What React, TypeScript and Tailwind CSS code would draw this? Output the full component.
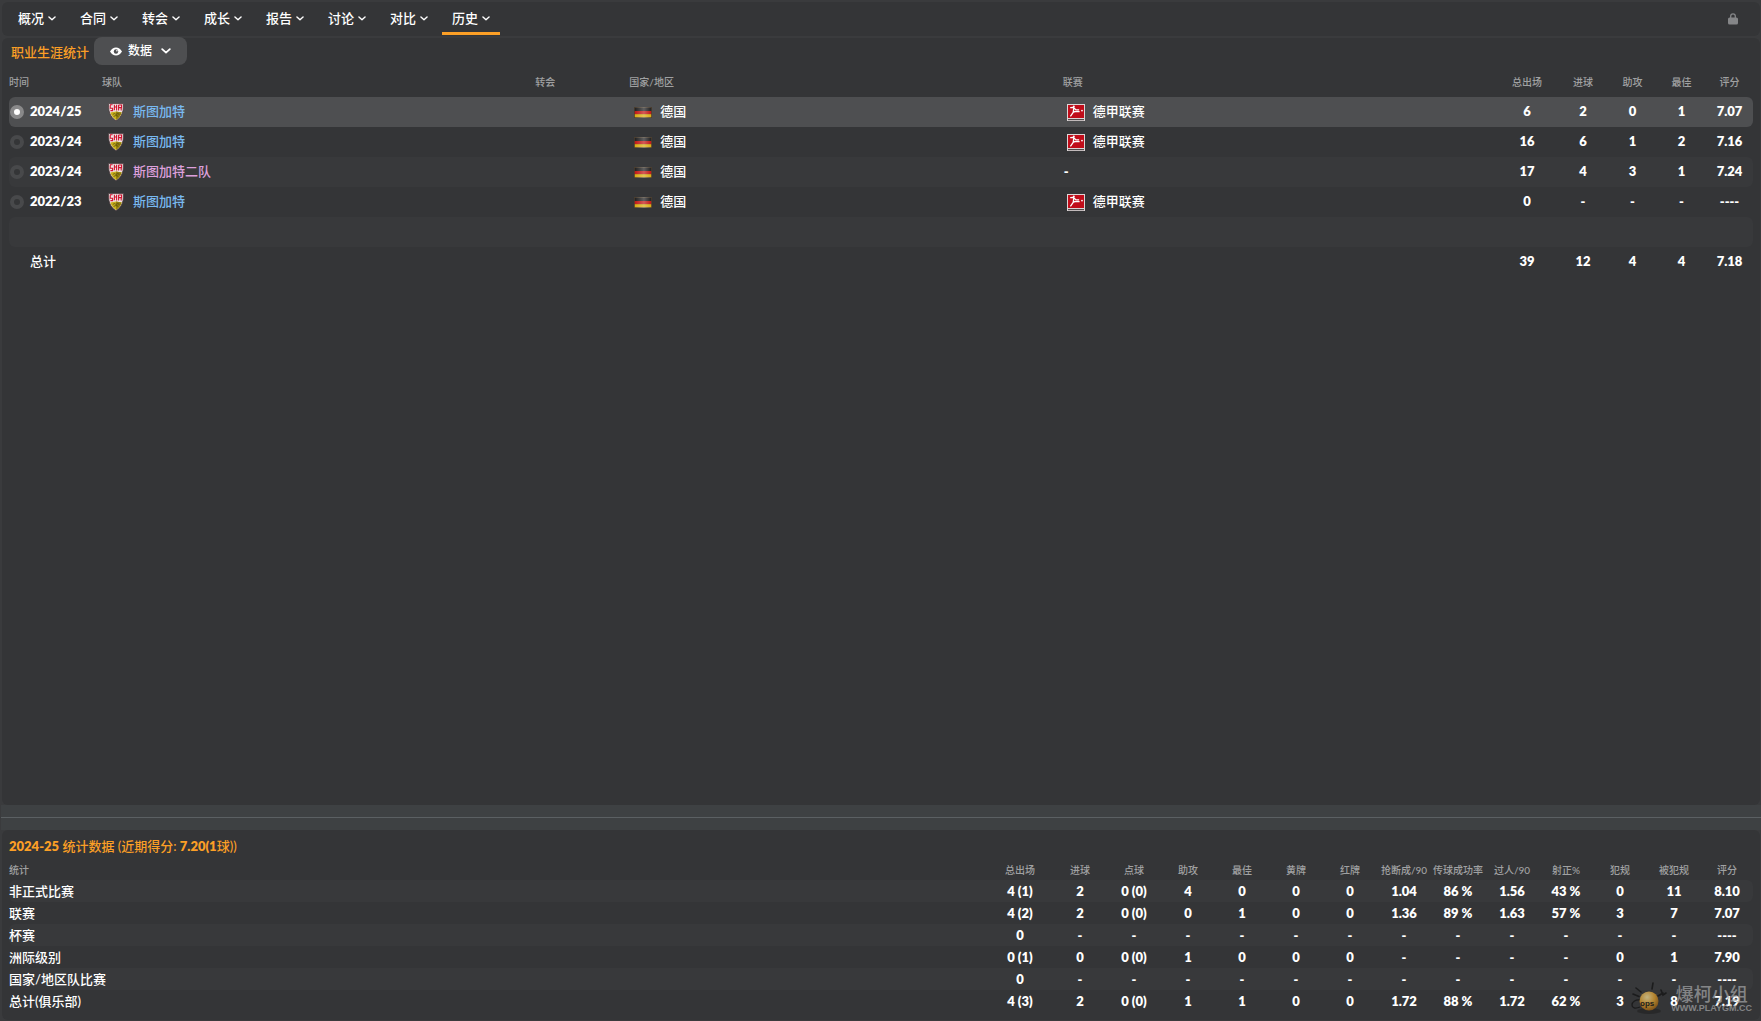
import React, { useState } from "react";

const navItems = ["概况", "合同", "转会", "成长", "报告", "讨论", "对比", "历史"];

type Season = {
  season: string;
  team: string;
  reserve?: boolean;
  country: string;
  league: string | null;
  stats: string[];
};

const seasons: Season[] = [
  { season: "2024/25", team: "斯图加特", country: "德国", league: "德甲联赛", stats: ["6", "2", "0", "1", "7.07"] },
  { season: "2023/24", team: "斯图加特", country: "德国", league: "德甲联赛", stats: ["16", "6", "1", "2", "7.16"] },
  { season: "2023/24", team: "斯图加特二队", reserve: true, country: "德国", league: null, stats: ["17", "4", "3", "1", "7.24"] },
  { season: "2022/23", team: "斯图加特", country: "德国", league: "德甲联赛", stats: ["0", "-", "-", "-", "----"] },
];

const careerTotals = ["39", "12", "4", "4", "7.18"];
const careerStatHeads = ["总出场", "进球", "助攻", "最佳", "评分"];

const detailHeads = [
  "总出场", "进球", "点球", "助攻", "最佳", "黄牌", "红牌",
  "抢断成/90", "传球成功率", "过人/90", "射正%", "犯规", "被犯规", "评分",
];

const detailRows: { name: string; values: string[] }[] = [
  { name: "非正式比赛", values: ["4 (1)", "2", "0 (0)", "4", "0", "0", "0", "1.04", "86 %", "1.56", "43 %", "0", "11", "8.10"] },
  { name: "联赛", values: ["4 (2)", "2", "0 (0)", "0", "1", "0", "0", "1.36", "89 %", "1.63", "57 %", "3", "7", "7.07"] },
  { name: "杯赛", values: ["0", "-", "-", "-", "-", "-", "-", "-", "-", "-", "-", "-", "-", "----"] },
  { name: "洲际级别", values: ["0 (1)", "0", "0 (0)", "1", "0", "0", "0", "-", "-", "-", "-", "0", "1", "7.90"] },
  { name: "国家/地区队比赛", values: ["0", "-", "-", "-", "-", "-", "-", "-", "-", "-", "-", "-", "-", "----"] },
  { name: "总计(俱乐部)", values: ["4 (3)", "2", "0 (0)", "1", "1", "0", "0", "1.72", "88 %", "1.72", "62 %", "3", "8", "7.19"] },
];

function Chevron({ className }: { className: string }) {
  return (
    <svg viewBox="0 0 10 6" className={className} fill="none" stroke="currentColor" strokeWidth="1.800" aria-hidden="true">
      <path d="M1.2 1.2 5 4.6 8.8 1.2" strokeLinecap="round" strokeLinejoin="round" />
    </svg>
  );
}

function EyeIcon() {
  return (
    <svg viewBox="0 0 12 9" className="h-[9px] w-3" aria-hidden="true">
      <path d="M0 4.5C1.6 1.8 3.6.4 6 .4s4.400 1.400 6 4.100C10.400 7.200 8.400 8.600 6 8.600S1.600 7.200 0 4.500Z" fill="#fff" />
      <circle cx="6" cy="4.500" r="2.200" fill="#4e4f51" />
      <circle cx="6.900" cy="3.700" r=".8" fill="#fff" />
    </svg>
  );
}

function LockIcon() {
  return (
    <svg viewBox="0 0 10 12" className="h-3 w-[10px]" aria-hidden="true">
      <path d="M2.700 5V3.100a2.300 2.300 0 0 1 4.600 0V5" fill="none" stroke="#858688" strokeWidth="1.300" />
      <rect x="0" y="4.400" width="10" height="7.200" rx="1.600" fill="#858688" />
    </svg>
  );
}

function ClubCrest() {
  return (
    <svg viewBox="0 0 16 18" className="h-[18px] w-4 shrink-0" aria-hidden="true">
      <path d="M.6.6h14.800c.3 5-.4 9-2.400 12.200C11.700 14.900 10 16.500 8 17.600 6 16.500 4.300 14.900 3 12.800 1 9.600.3 5.600.6.600Z" fill="#efe3e4" stroke="#4a3a3c" strokeWidth=".8" />
      <path d="M2.300 9.600 8 8.600l5.700 1c-1 3.200-2.900 5.700-5.700 7.300-2.800-1.600-4.700-4.100-5.700-7.300Z" fill="#c9b01c" />
      <path d="M8 8.600V16.900c2.800-1.600 4.700-4.100 5.700-7.300Z" fill="#94800f" />
      <path d="m4.800 11.400 1.700-.8 1.500.8 1.800-.8 1.600.8M5.600 13.400l2.400-.9 2.200.8" fill="none" stroke="#4a400c" strokeWidth=".7" />
      <path d="M2 1.800h2.600M2.200 2.200v3h2.400v2.400H2.400M6.400 1.800v5.400M6.400 4h2.200M8.600 1.800v5.800M10.600 1.800v5.600M11 2h2.600v2.600H11M13.200 5v2.400" fill="none" stroke="#d2122e" strokeWidth="1.100" />
    </svg>
  );
}

function GermanFlag() {
  return (
    <svg viewBox="0 0 18 11" className="h-[11px] w-[18px] shrink-0" aria-hidden="true">
      <defs>
        <linearGradient id="flagShine" x1="0" x2="1" y1="0" y2="0">
          <stop offset="0" stopColor="#fff" stopOpacity="0" />
          <stop offset=".55" stopColor="#fff" stopOpacity=".3" />
          <stop offset="1" stopColor="#fff" stopOpacity="0" />
        </linearGradient>
      </defs>
      <rect width="18" height="11" fill="#4a3d2c" />
      <rect x=".8" y="0.800" width="16.400" height="3.200" fill="#1b1b1c" />
      <rect x=".8" y="4" width="16.400" height="3.200" fill="#c0120f" />
      <rect x=".8" y="7.200" width="16.400" height="3" fill="#d9a90b" />
      <rect width="18" height="11" fill="url(#flagShine)" />
    </svg>
  );
}

function LeagueBadge() {
  return (
    <svg viewBox="0 0 18 17" className="h-[17px] w-[18px] shrink-0" aria-hidden="true">
      <rect width="18" height="17" fill="#dcd6d6" />
      <rect x="1" y="1" width="16" height="13" fill="#c00d1a" />
      <rect x="1" y="15" width="16" height="1.200" fill="#55494a" />
      <path d="M3.200 3.600 6.500 3.400l2.200 2.200 3.400.2M6.800 4.200 6.200 8.400 3.400 12.400M6.400 8l2.600-.6 3.600.2" fill="none" stroke="#fff" strokeWidth="1.300" strokeLinejoin="round" />
      <circle cx="6.800" cy="2.600" r="1" fill="#fff" />
      <circle cx="15" cy="6.600" r=".9" fill="#fff" />
    </svg>
  );
}

function Watermark() {
  return (
    <div className="pointer-events-none absolute right-2 bottom-1 flex items-center gap-1 opacity-70">
      <svg viewBox="0 0 36 34" className="h-[34px] w-9" aria-hidden="true">
        <defs>
          <radialGradient id="orb" cx=".4" cy=".3" r=".8">
            <stop offset="0" stopColor="#ffe9a0" />
            <stop offset=".5" stopColor="#e9a52c" />
            <stop offset="1" stopColor="#8a4c05" />
          </radialGradient>
        </defs>
        <ellipse cx="18" cy="29" rx="12" ry="3" fill="#1c1c1c" opacity=".7" />
        <path d="M2 12l6 2.500M5 6l5 4M22 1l-1 6M27 14l5-3M30 8l2 5 3-2" fill="none" stroke="#111" strokeWidth="1.600" strokeLinecap="round" />
        <path d="M9 18c-4-1-8 2-8 5s3 4 8 2" fill="none" stroke="#111" strokeWidth="1.300" />
        <circle cx="18" cy="19" r="9.500" fill="url(#orb)" />
        <text x="9" y="24" fontSize="8" fontWeight="700" fontFamily="Liberation Sans, sans-serif" fill="#111">ops</text>
      </svg>
      <div className="flex flex-col items-center text-[#a5a6a8]">
        <span className="text-lg leading-[18px] font-medium">爆柯小组</span>
        <span className="font-['Liberation_Sans',sans-serif] text-[9px] leading-[10px] font-bold">WWW.PLAYGM.CC</span>
      </div>
    </div>
  );
}

function cellTone(tone: "selected" | "alt" | "plain") {
  if (tone === "selected") return "bg-[#4e4f51]";
  if (tone === "alt") return "bg-[#38393b]";
  return "";
}

export default function App() {
  const [selected, setSelected] = useState(0);

  return (
    <div className="flex min-h-screen flex-col bg-[#3a3b3d] pt-[2px] pr-px pb-px pl-[2px] font-['Lato','Noto_Sans_CJK_SC',sans-serif] text-[13px] font-extrabold text-white">
      <nav className="flex h-[34px] shrink-0 items-stretch justify-between rounded-md bg-[#343537] pr-[22px] pl-[6px]">
        <div className="flex h-[33px] gap-1">
          {navItems.map((item) => (
            <button
              key={item}
              type="button"
              className={
                item === "历史"
                  ? "flex w-[58px] items-center justify-center gap-1 border-y-3 border-t-transparent border-b-[#fb9f26] font-medium"
                  : "flex w-[58px] items-center justify-center gap-1 border-y-3 border-transparent font-medium"
              }
            >
              {item}
              <Chevron className="h-[5px] w-2" />
            </button>
          ))}
        </div>
        <button type="button" aria-label="锁定">
          <LockIcon />
        </button>
      </nav>

      <main className="mt-[2px] flex flex-1 flex-col rounded-md bg-[#343537] pr-[7px] pl-[7px]">
        <header className="flex items-start gap-[5px] pl-[2px]">
          <h1 className="pt-1 leading-5 font-medium text-[#fb9f26]">职业生涯统计</h1>
          <button type="button" className="-mt-px flex h-7 w-[93px] items-center justify-center rounded-lg bg-[#4e4f51] text-xs font-medium">
            <EyeIcon />
            <span className="mr-[9px] ml-[6px]">数据</span>
            <Chevron className="h-[6px] w-[10px]" />
          </button>
        </header>

        <table className="mt-[2px] w-full table-fixed border-separate border-spacing-0 text-left">
          <colgroup>
            <col className="w-[93px]" />
            <col />
            <col className="w-[94px]" />
            <col />
            <col />
            <col className="w-[62px]" />
            <col className="w-[50px]" />
            <col className="w-[49px]" />
            <col className="w-[49px]" />
            <col className="w-[47px]" />
          </colgroup>
          <thead>
            <tr className="h-[30px] text-[10px] text-[#a0a1a2] [&>th]:p-0 [&>th]:font-medium">
              <th>时间</th>
              <th>球队</th>
              <th>转会</th>
              <th>国家/地区</th>
              <th>联赛</th>
              {careerStatHeads.map((head) => (
                <th key={head} className="text-center">{head}</th>
              ))}
            </tr>
          </thead>
          <tbody className="[&_td]:p-0 [&_td:first-child]:rounded-l-md [&_td:last-child]:rounded-r-md">
            {seasons.map((row, i) => {
              const tone = cellTone(i === selected ? "selected" : i % 2 === 0 ? "alt" : "plain");
              return (
                <tr key={i} className="h-[30px]">
                  <td className={tone}>
                    <label className="flex items-center gap-[6px] pl-px">
                      <input
                        type="radio"
                        name="season"
                        checked={i === selected}
                        onChange={() => setSelected(i)}
                        className="size-[14px] appearance-none rounded-full border-4 border-[#48494b] bg-[#343537] checked:border-[#89898a] checked:bg-white"
                      />
                      {row.season}
                    </label>
                  </td>
                  <td className={tone}>
                    <div className="flex items-center gap-[9px] pl-[6px]">
                      <ClubCrest />
                      <a href="#team" className={row.reserve ? "font-medium text-[#dda0dc]" : "font-medium text-[#79b9f0]"}>
                        {row.team}
                      </a>
                    </div>
                  </td>
                  <td className={tone}></td>
                  <td className={tone}>
                    <div className="flex items-center gap-2 pl-[5px] font-medium">
                      <GermanFlag />
                      {row.country}
                    </div>
                  </td>
                  <td className={tone}>
                    {row.league ? (
                      <div className="flex items-center gap-2 pl-1 font-medium">
                        <LeagueBadge />
                        {row.league}
                      </div>
                    ) : (
                      <div className="pl-px">-</div>
                    )}
                  </td>
                  {row.stats.map((value, j) => (
                    <td key={j} className={tone}>
                      <div className="text-center">{value}</div>
                    </td>
                  ))}
                </tr>
              );
            })}
            <tr className="h-[30px]">
              <td colSpan={10} className="rounded-md bg-[#38393b]"></td>
            </tr>
            <tr className="h-[30px]">
              <td colSpan={5}>
                <div className="pl-[21px] font-medium">总计</div>
              </td>
              {careerTotals.map((value, j) => (
                <td key={j} className="text-center">{value}</td>
              ))}
            </tr>
          </tbody>
        </table>
      </main>

      <div className="-mr-px -ml-px flex h-[25px] shrink-0 items-center bg-[#3e4143]">
        <hr className="w-full border-[#5b6063]" />
      </div>

      <section className="relative rounded-md bg-[#343537] px-[7px] pt-[6px] pb-2">
        <h2 className="leading-5 font-medium text-[#fb9f26]">
          <span className="font-extrabold">2024-25</span> 统计数据 (近期得分: <span className="font-extrabold">7.20(1</span>球))
        </h2>
        <table className="mt-1 w-full table-fixed border-separate border-spacing-0 text-center">
          <colgroup>
            <col />
            <col className="w-[66px]" />
            {detailHeads.slice(2).map((head) => (
              <col key={head} className="w-[54px]" />
            ))}
            <col className="w-[52px]" />
          </colgroup>
          <thead>
            <tr className="h-5 text-[10px] text-[#a0a1a2] [&>th]:p-0 [&>th]:font-medium [&>th]:whitespace-nowrap">
              <th className="text-left">统计</th>
              {detailHeads.map((head) => (
                <th key={head}>{head}</th>
              ))}
            </tr>
          </thead>
          <tbody className="leading-5 [&_td]:p-0 [&_td:last-child]:rounded-r-md [&_th]:rounded-l-md [&_th]:p-0">
            {detailRows.map((row, i) => {
              const tone = cellTone(i % 2 === 0 ? "alt" : "plain");
              return (
                <tr key={row.name} className="h-[22px]">
                  <th scope="row" className={tone}>
                    <div className="text-left font-medium">{row.name}</div>
                  </th>
                  {row.values.map((value, j) => (
                    <td key={j} className={tone}>{value}</td>
                  ))}
                </tr>
              );
            })}
          </tbody>
        </table>
        <Watermark />
      </section>
    </div>
  );
}
